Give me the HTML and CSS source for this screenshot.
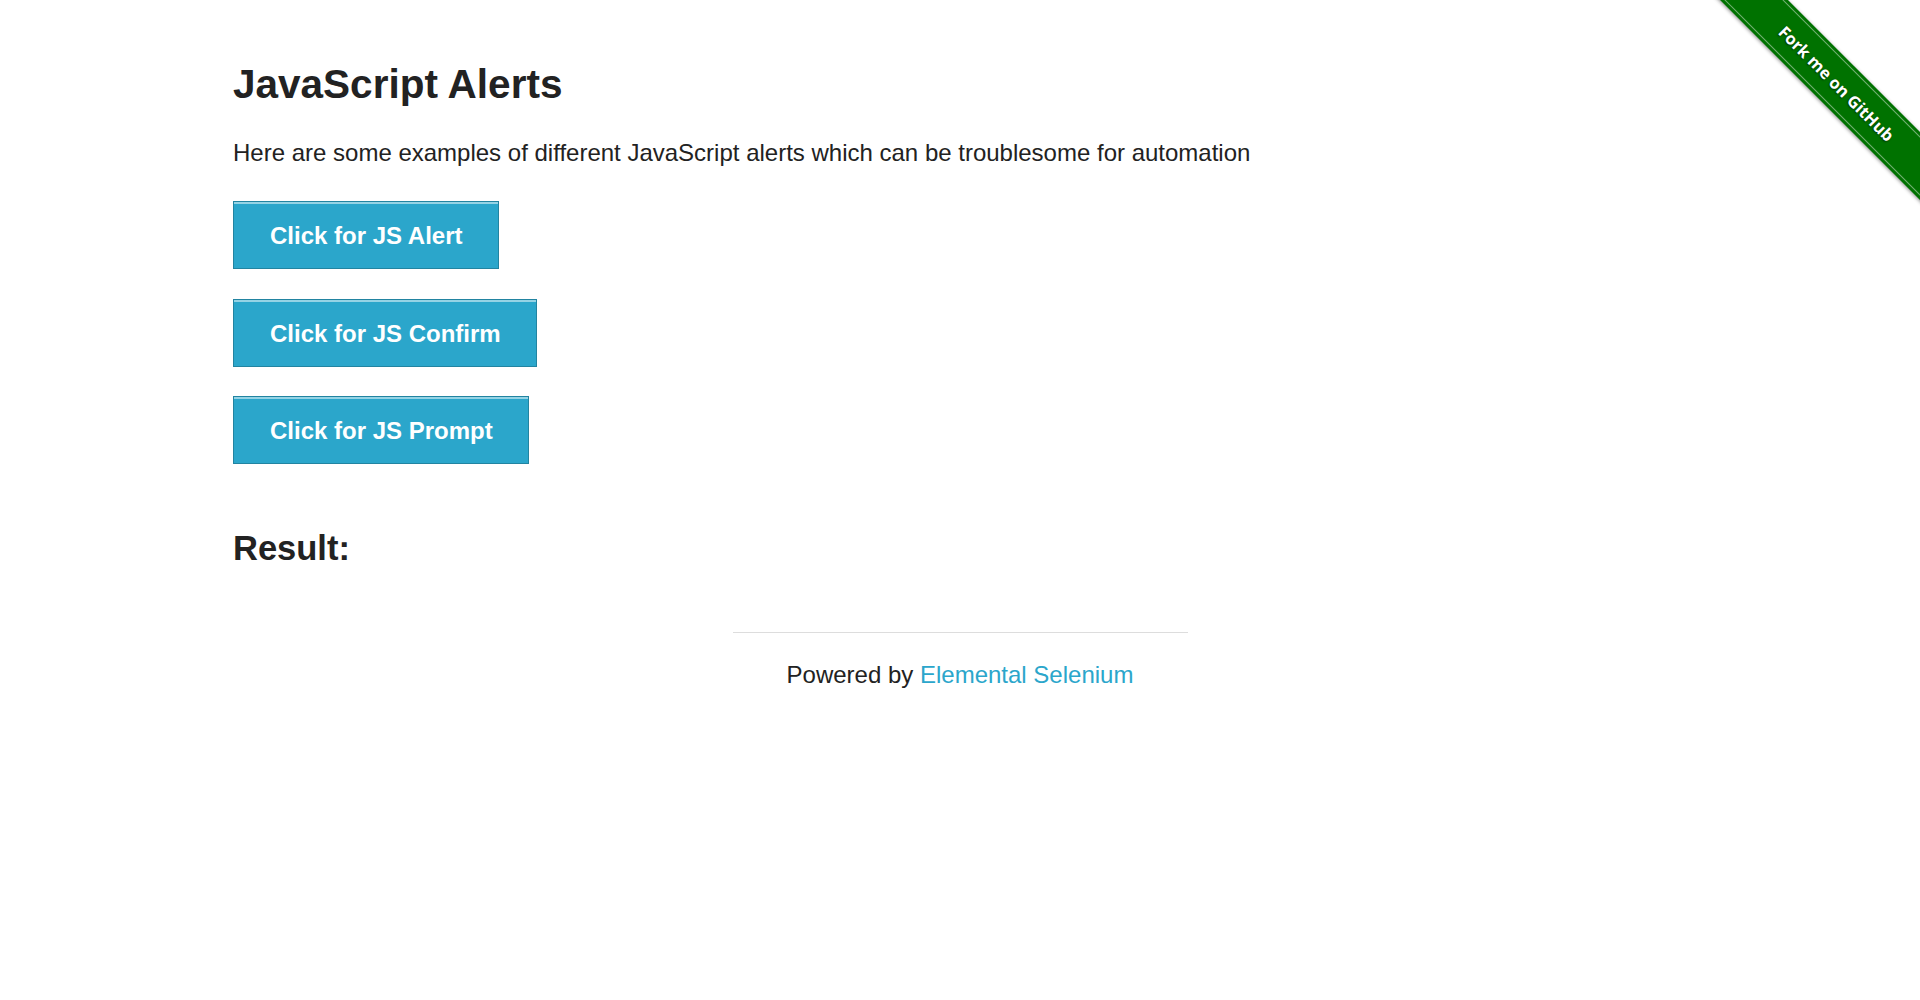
FILE: index.html
```html
<!DOCTYPE html>
<html lang="en">
<head>
<meta charset="utf-8">
<title>The Internet</title>
<link rel="stylesheet" href="styles.css">
</head>
<body>
<div class="ribbon-wrap">
  <a class="ribbon" href="#">Fork me on GitHub</a>
</div>
<div class="page">
  <div class="example">
    <h3 class="title">JavaScript Alerts</h3>
    <p class="intro">Here are some examples of different JavaScript alerts which can be troublesome for automation</p>
    <ul class="actions">
      <li><button class="btn">Click for JS Alert</button></li>
      <li><button class="btn">Click for JS Confirm</button></li>
      <li><button class="btn">Click for JS Prompt</button></li>
    </ul>
    <h4 class="result-title">Result:</h4>
    <p class="result"></p>
  </div>
</div>
<div class="footer">
  <div class="footer-col">
    <div class="rule"></div>
    <div class="powered">Powered by <a class="link" href="#">Elemental Selenium</a></div>
  </div>
</div>
</body>
</html>
```

FILE: styles.css
```css
html, body {
  margin: 0;
  padding: 0;
  background: #ffffff;
}

body {
  font-family: "Liberation Sans", Arial, Helvetica, sans-serif;
  color: #222222;
  font-size: 24px;
  position: relative;
  min-height: 1000px;
  overflow: hidden;
}

.page {
  max-width: 1500px;
  margin: 0 auto;
  padding: 59.6px 23px 0;
  box-sizing: border-box;
}

.title {
  margin: 0;
  font-size: 40.5px;
  line-height: 48.6px;
  font-weight: bold;
  color: #222222;
}

.intro {
  margin: 25.5px 0 0;
  font-size: 24px;
  line-height: 38.4px;
}

.actions {
  list-style: none;
  margin: 29px 0 0;
  padding: 0;
  display: flex;
  flex-direction: column;
  align-items: flex-start;
  gap: 29.5px;
}

.actions li {
  display: flex;
}

.btn {
  font-family: "Liberation Sans", Arial, Helvetica, sans-serif;
  font-size: 24px;
  font-weight: bold;
  line-height: 28px;
  color: #ffffff;
  background: #2ba6cb;
  border: 1px solid #2284a1;
  box-shadow: inset 0 2px 0 rgba(255, 255, 255, 0.5);
  padding: 20px 35.5px 18px 36px;
  margin: 0;
  border-radius: 0;
  cursor: pointer;
}

.result-title {
  margin: 64px 0 0;
  font-size: 34.5px;
  line-height: 41.4px;
  font-weight: bold;
  color: #222222;
}

.result {
  margin: 0;
  height: 0;
}

.footer {
  display: flex;
  justify-content: center;
  padding-top: 62.6px;
}

.footer-col {
  width: 500px;
  padding: 0 22.5px;
  box-sizing: border-box;
}

.rule {
  border-top: 1px solid #dddddd;
  height: 0;
}

.powered {
  margin-top: 22.7px;
  text-align: center;
  font-size: 24px;
  line-height: 38.4px;
}

.link {
  color: #2ba6cb;
  text-decoration: none;
}

.ribbon-wrap {
  position: absolute;
  top: 0;
  right: 0;
  width: 210px;
  height: 210px;
  overflow: hidden;
  z-index: 10;
}

.ribbon {
  position: absolute;
  left: -23px;
  top: 59px;
  width: 300px;
  height: 48px;
  box-sizing: border-box;
  transform: rotate(45deg);
  background: #007200;
  color: #ffffff;
  text-decoration: none;
  display: flex;
  align-items: center;
  justify-content: center;
  font-family: "Open Sans", "DejaVu Sans", sans-serif;
  font-weight: 700;
  font-size: 16.5px;
  text-shadow: 0 1px 2px rgba(0, 0, 0, 0.6);
  box-shadow: 0 1px 4px rgba(0, 0, 0, 0.45);
}

.ribbon::before,
.ribbon::after {
  content: "";
  position: absolute;
  left: 0;
  right: 0;
  border-top: 1px solid rgba(255, 255, 255, 0.45);
}

.ribbon::before {
  top: 3px;
}

.ribbon::after {
  bottom: 3px;
}
```
